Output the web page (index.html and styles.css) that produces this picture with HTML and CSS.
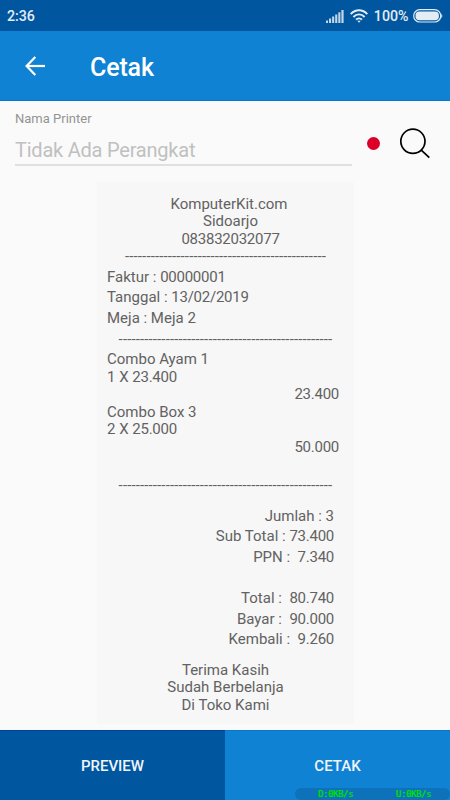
FILE: index.html
```html
<!DOCTYPE html>
<html lang="id">
  <head>
    <meta charset="utf-8">
    <title>Cetak</title>
    <link rel="stylesheet" href="styles.css">
  </head>
  <body>
    <div class="status-bar">
      <span class="clock">2:36</span>
      <div class="status-icons">
        <svg class="signal" width="18" height="13" viewBox="0 0 18 13" fill="currentColor">
          <rect x="0" y="10.5" width="2" height="2.5" />
          <rect x="3" y="8.5" width="2.1" height="4.5" />
          <rect x="6.1" y="6.5" width="2.1" height="6.5" />
          <rect x="9.2" y="4.5" width="2.1" height="8.5" />
          <rect x="12.3" y="2.3" width="2.1" height="10.7" />
          <rect x="15.4" y="0" width="2.2" height="13" />
        </svg>
        <svg class="wifi" width="18" height="14" viewBox="0 0 18 14" fill="none" stroke="currentColor" stroke-width="1.9">
          <path d="M0.7 5.2C5.4 0 12.6 0 17.3 5.2" />
          <path d="M3.4 8C6.6 4.5 11.4 4.5 14.6 8" />
          <path d="M6 10.7C7.7 8.9 10.3 8.9 12 10.7" />
          <path d="M7.3 11.7L9 13.7L10.7 11.7Z" fill="currentColor" stroke="none" />
        </svg>
        <span class="percent">100%</span>
        <svg class="battery" width="30" height="14" viewBox="0 0 30 14">
          <rect x="0.7" y="0.7" width="27" height="12.3" rx="6.1" fill="none" stroke="currentColor" stroke-width="1.2" />
          <rect x="2.5" y="2.5" width="23.4" height="8.7" rx="4" fill="currentColor" />
          <path d="M28.3 4.5Q30.4 7 28.3 9.3Z" fill="currentColor" />
        </svg>
      </div>
    </div>

    <header class="toolbar">
      <svg class="back" width="20" height="20" viewBox="0 0 20 20" fill="none" stroke="currentColor" stroke-width="2.2">
        <path d="M20 10H2" />
        <path d="M10.3 0.9L1.6 10L10.3 19.1" />
      </svg>
      <h1 class="title">Cetak</h1>
    </header>

    <main class="content">
      <div class="printer">
        <div class="field">
          <label class="label">Nama Printer</label>
          <div class="value">Tidak Ada Perangkat</div>
        </div>
        <span class="dot"></span>
        <svg class="search" width="32" height="32" viewBox="0 0 32 32" fill="none" stroke="#000" stroke-width="1.7">
          <circle cx="13.9" cy="13.3" r="12.1" />
          <path d="M22 21.8L30.3 29.7" />
        </svg>
      </div>

      <div class="receipt">
        <div class="store">
          <div class="name">KomputerKit.com</div>
          <div>Sidoarjo</div>
          <div class="num">083832032077</div>
        </div>
        <div class="rule">-----------------------------------------------</div>
        <div class="info">
          <div>Faktur : <span class="num">00000001</span></div>
          <div>Tanggal : <span class="num">13/02/2019</span></div>
          <div>Meja : Meja 2</div>
        </div>
        <div class="rule">--------------------------------------------------</div>
        <div class="items">
          <div>Combo Ayam 1</div>
          <div>1 X <span class="num">23.400</span></div>
          <div class="num price">23.400</div>
          <div>Combo Box 3</div>
          <div>2 X <span class="num">25.000</span></div>
          <div class="num price">50.000</div>
        </div>
        <div class="rule">--------------------------------------------------</div>
        <div class="totals">
          <div>Jumlah : 3</div>
          <div>Sub Total : <span class="num">73.400</span></div>
          <div>PPN :&nbsp; <span class="num">7.340</span></div>
          <div class="grand">Total :&nbsp; <span class="num">80.740</span></div>
          <div>Bayar :&nbsp; <span class="num">90.000</span></div>
          <div>Kembali :&nbsp; <span class="num">9.260</span></div>
        </div>
        <div class="thanks">
          <div>Terima Kasih</div>
          <div>Sudah Berbelanja</div>
          <div>Di Toko Kami</div>
        </div>
      </div>
    </main>

    <footer class="actions">
      <button class="action preview">PREVIEW</button>
      <button class="action print">CETAK</button>
      <div class="net-speed">
        <span>D:0KB/s</span>
        <span>U:0KB/s</span>
      </div>
    </footer>
  </body>
</html>
```

FILE: styles.css
```css
:root {
  --primary: #1082d3;
  --primary-dark: #00569f;
  --bg: #fafafa;
  --paper: #f7f7f7;
  --text: #626262;
}

* {
  box-sizing: border-box;
}

body {
  margin: 0;
  height: 800px;
  display: flex;
  flex-direction: column;
  overflow: hidden;
  background: var(--bg);
  color: var(--text);
  font-family: Roboto, sans-serif;
  font-size: 15px;
}

.status-bar {
  height: 31px;
  flex: none;
  display: flex;
  align-items: center;
  justify-content: space-between;
  padding: 1px 7.5px 0 7px;
  background: var(--primary-dark);
  color: #e3edf6;
  font-size: 14.2px;
  font-weight: 500;
}

.status-icons {
  display: flex;
  align-items: center;
}

.signal {
  opacity: 0.85;
}

.wifi {
  margin-left: 6px;
}

.percent {
  margin: 0 4px 0 6px;
}

.toolbar {
  height: 70px;
  flex: none;
  display: flex;
  align-items: center;
  padding-left: 25px;
  background: var(--primary);
  border-bottom: 1px solid #0676d0;
  color: #fff;
}

.title {
  margin: 3px 0 0 45px;
  font-size: 25px;
  font-weight: 500;
  letter-spacing: -0.15px;
}

.content {
  flex: 1;
  display: flex;
  flex-direction: column;
}

.printer {
  height: 81px;
  flex: none;
  display: flex;
  align-items: flex-start;
  padding: 10px 0 0 15px;
}

.field {
  width: 337px;
  height: 55px;
  border-bottom: 2px solid #e0e0e0;
}

.label {
  display: block;
  font-size: 13px;
  line-height: 16px;
  color: #949494;
}

.value {
  margin-top: 10px;
  font-size: 20px;
  letter-spacing: -0.22px;
  line-height: 26px;
  color: #c0c0c0;
}

.dot {
  width: 13px;
  height: 13px;
  margin: 26px 0 0 15px;
  border-radius: 50%;
  background: #dc0028;
}

.search {
  margin: 17px 0 0 19px;
}

.receipt {
  width: 257px;
  height: 542px;
  margin-left: 97px;
  padding: 13px 10px 0;
  background: var(--paper);
  line-height: 17.5px;
}

.num {
  letter-spacing: -0.25px;
}

.store {
  text-align: center;
  padding: 0.5px 0 0 10px;
}

.store .name {
  margin-left: -3px;
}

.rule {
  margin: 0 -10px;
  text-align: center;
  white-space: nowrap;
  letter-spacing: 0.13px;
}

.info {
  margin: 1px 0 2.5px;
  line-height: 20.6px;
}

.items {
  margin: 3px 0 20.5px;
}

.price {
  text-align: right;
  padding-right: 5px;
}

.totals {
  margin-top: 11.5px;
  padding-right: 10px;
  text-align: right;
  line-height: 20.6px;
}

.grand {
  margin-top: 20.4px;
}

.thanks {
  margin-top: 12px;
  text-align: center;
}

.actions {
  position: relative;
  height: 70px;
  flex: none;
  display: flex;
}

.action {
  flex: 1;
  border: none;
  padding: 1px 0 0;
  color: #f0f5fa;
  font-family: inherit;
  font-size: 15px;
  font-weight: 500;
}

.preview {
  background: var(--primary-dark);
  border-top: 1px solid #0040a0;
}

.print {
  background: var(--primary);
  border-top: 1px solid #0676d0;
}

/* network speed overlay */
.net-speed {
  position: absolute;
  right: 0;
  bottom: 0;
  width: 155px;
  height: 12px;
  display: flex;
  justify-content: space-between;
  padding: 0 19px 0 23px;
  border-radius: 6px;
  background: #0e72ba;
  color: #00e010;
  font-family: "DejaVu Sans Mono", monospace;
  font-size: 9px;
  letter-spacing: -0.4px;
  line-height: 12px;
  text-shadow: 0.5px 0 0 #00c818;
}
```
